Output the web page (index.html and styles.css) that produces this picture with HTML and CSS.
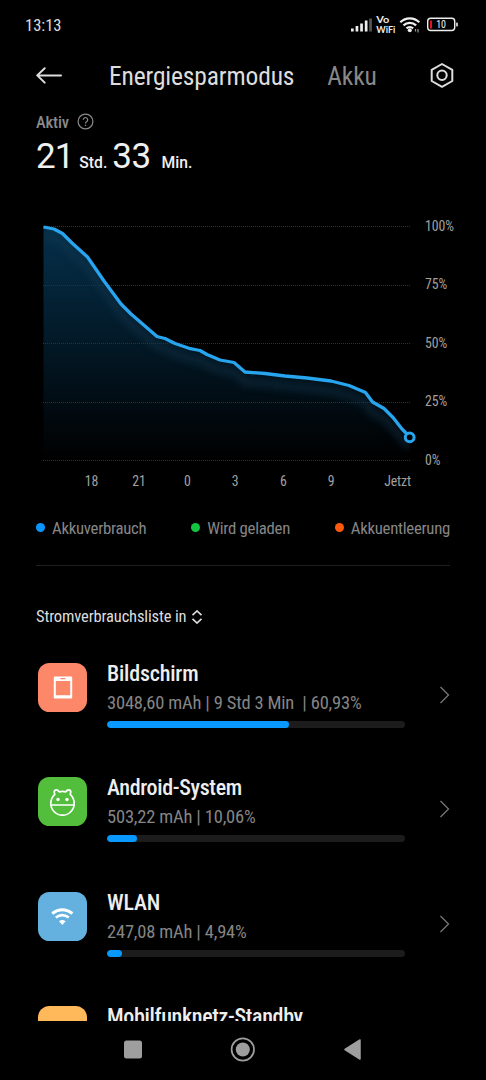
FILE: index.html
```
<!DOCTYPE html>
<html lang="de">
<head>
<meta charset="utf-8">
<title>Akku</title>
<link rel="stylesheet" href="styles.css">
</head>
<body>
<div class="screen">
  <div class="statusbar">
    <span class="clock">13:13</span>
    <svg class="status-icons" width="112" height="24" viewBox="348 13 112 24">
      <g fill="#eee">
        <rect x="351" y="28.5" width="2.7" height="3"/><rect x="355.6" y="26" width="2.7" height="5.5"/><rect x="360.2" y="23.5" width="2.7" height="8"/><rect x="364.8" y="20.5" width="2.7" height="11"/>
        <rect x="369.2" y="18.5" width="2.7" height="13" fill="#555"/>
      </g>
      <text class="vo" x="376.3" y="23.300" textLength="13" lengthAdjust="spacingAndGlyphs">Vo</text>
      <text class="vo" x="376.3" y="33" textLength="19" lengthAdjust="spacingAndGlyphs">WiFi</text>
      <g fill="none" stroke="#eee" stroke-width="2.200">
        <path d="M400.3 22.2a13.5 13.5 0 0 1 19 0"/><path d="M403.5 25.4a9 9 0 0 1 12.6 0"/><path d="M406.5 28.4a5 5 0 0 1 6.6 0"/>
      </g>
      <circle cx="409.8" cy="30.2" r="2" fill="#eee"/>
      <path d="M415.500 31.500v-2.500M418 29v3.500" stroke="#999" stroke-width="1.2"/>
      <rect x="427.7" y="18.2" width="27" height="12.3" rx="3" fill="none" stroke="#eee" stroke-width="1.4"/>
      <rect x="456.2" y="22.4" width="1.6" height="4" rx=".6" fill="#eee"/>
      <rect x="430" y="20.5" width="2" height="8" fill="#e3141c"/>
      <text class="level" x="436.3" y="28" textLength="9.6">10</text>
    </svg>
  </div>
  <div class="header">
    <svg class="back" width="28" height="20" viewBox="35 65 28 20"><path d="M61 75.4H37.5M44.7 68.2l-7.5 7.2 7.5 7.2" fill="none" stroke="#ddd" stroke-width="2" stroke-linecap="round" stroke-linejoin="round"/></svg>
    <span class="tab active">Energiesparmodus</span>
    <span class="tab">Akku</span>
    <svg class="gear" width="26" height="28" viewBox="429 61 26 28"><path d="M442 64l10.3 5.8v11.2L442 86.800l-10.300-5.800V69.800z" fill="none" stroke="#ddd" stroke-width="2" stroke-linejoin="round"/><circle cx="442" cy="75.300" r="4.700" fill="none" stroke="#ddd" stroke-width="2"/></svg>
  </div>
  <div class="activity">
    <div class="label"><span>Aktiv</span><svg width="17" height="17" viewBox="0 0 17 17"><circle cx="8.500" cy="8.500" r="7.400" fill="none" stroke="#8a8a8a" stroke-width="1.200"/><path d="M6.300 6.800a2.200 2.200 0 1 1 3.500 1.700q-1.300.8-1.300 2" fill="none" stroke="#8a8a8a" stroke-width="1.200"/><circle cx="8.500" cy="12.200" r=".8" fill="#8a8a8a"/></svg></div>
    <div class="time"><span class="num tight">21</span><span class="unit std">Std.</span><span class="num">33</span><span class="unit">Min.</span></div>
  </div>
  <svg class="chart" width="486" height="300" viewBox="0 205 486 300">
    <defs>
      <linearGradient id="fill" x1="0" y1="227" x2="0" y2="460" gradientUnits="userSpaceOnUse"><stop offset="0" stop-color="#05304b"/><stop offset=".45" stop-color="#031b2a"/><stop offset="1" stop-color="#000"/></linearGradient>
      <filter id="soft" x="-10%" y="-10%" width="120%" height="130%"><feGaussianBlur stdDeviation="3.500"/></filter>
      <clipPath id="area"><path d="M43.500 227L54 229 62.500 233.500 72 243 87.500 257 104 281 121 304 131 314 142 323.500 157 336.500 165 338.500 175 343.500 189 348.300 200 350.500 207 354.500 220 360 234 362.500 245 372 265 373.500 285 376 307 378 331 381 349 385.500 365.500 392.500 372.500 402 384 408.500 393 417.500 402 429 410 437V461H43.500z"/></clipPath>
    </defs>
    <g clip-path="url(#area)">
      <rect x="43" y="226" width="368" height="236" fill="url(#fill)"/>
      <path class="glow" filter="url(#soft)" transform="translate(0 10)" d="M43.500 227L54 229 62.500 233.500 72 243 87.500 257 104 281 121 304 131 314 142 323.500 157 336.500 165 338.500 175 343.500 189 348.300 200 350.500 207 354.500 220 360 234 362.500 245 372 265 373.500 285 376 307 378 331 381 349 385.500 365.500 392.500 372.500 402 384 408.500 393 417.500 402 429 410 437"/>
    </g>
    <path class="gridlines" d="M43 226.500H411M43 285.500H411M43 343.500H411M43 402.500H411M43 460.500H411"/>
    <path class="curve" d="M43.500 227L54 229 62.500 233.500 72 243 87.500 257 104 281 121 304 131 314 142 323.500 157 336.500 165 338.500 175 343.500 189 348.300 200 350.500 207 354.500 220 360 234 362.500 245 372 265 373.500 285 376 307 378 331 381 349 385.500 365.500 392.500 372.500 402 384 408.500 393 417.500 402 429 408 435"/>
    <circle cx="409.700" cy="437.300" r="4.400" fill="#000" stroke="#27a5ee" stroke-width="3"/>
    <g class="axis">
      <text x="425" y="231">100%</text><text x="425" y="289.300">75%</text><text x="425" y="347.800">50%</text><text x="425" y="406.300">25%</text><text x="425" y="464.800">0%</text>
      <g text-anchor="middle"><text x="91.500" y="486">18</text><text x="139" y="486">21</text><text x="187.300" y="486">0</text><text x="235" y="486">3</text><text x="283.300" y="486">6</text><text x="331" y="486">9</text></g>
      <text x="411" y="486" text-anchor="end">Jetzt</text>
    </g>
  </svg>
  <div class="legend">
    <span class="key"><i class="dot blue"></i>Akkuverbrauch</span>
    <span class="key"><i class="dot green"></i>Wird geladen</span>
    <span class="key"><i class="dot orange"></i>Akkuentleerung</span>
  </div>
  <div class="sort"><span>Stromverbrauchsliste in</span><svg width="12" height="14" viewBox="0 0 12 14"><path d="M1.500 5.200L6 1l4.500 4.200M1.500 8.800L6 13l4.500-4.200" fill="none" stroke="#ddd" stroke-width="1.700"/></svg></div>
  <div class="list">
    <div class="row">
      <svg class="icon" viewBox="0 0 49 49"><rect width="49" height="49" rx="11.500" fill="#fc8769"/><path fill="#fff" fill-rule="evenodd" d="M16.800 13.500h16.400q1 0 1 1v20q0 1-1 1H16.800q-1 0-1-1v-20q0-1 1-1zM17.800 18v14.200h14.400V18zM22.500 15v1.300h5V15z"/></svg>
      <div class="body"><div class="name wide">Bildschirm</div><div class="detail">3048,60 mAh | 9 Std 3 Min &nbsp;| 60,93%</div><div class="track"><div class="bar" style="width:60.93%"></div></div></div>
      <svg class="chev" viewBox="0 0 12 18"><path d="M1.500 1l8 8-8 8"/></svg>
    </div>
    <div class="row">
      <svg class="icon" viewBox="0 0 49 49"><rect width="49" height="49" rx="11.500" fill="#53be3b"/><g fill="none" stroke="#fff" stroke-width="1.700" stroke-linecap="round" stroke-linejoin="round"><path d="M16.800 17.300Q12.800 21 12.800 26.500a11.700 11.700 0 0 0 23.400 0q0-5.500-4-9.200 1.500-3-.6-4.200-2.200-.8-3.800 1.800-3.300-1-6.600 0-1.600-2.600-3.800-1.800-2.100 1.200-.6 4.200zM12.900 28h23.200"/></g><circle cx="20" cy="22.500" r="1.700" fill="#fff"/><circle cx="29" cy="22.500" r="1.700" fill="#fff"/></svg>
      <div class="body"><div class="name">Android-System</div><div class="detail">503,22 mAh | 10,06%</div><div class="track"><div class="bar" style="width:10.06%"></div></div></div>
      <svg class="chev" viewBox="0 0 12 18"><path d="M1.500 1l8 8-8 8"/></svg>
    </div>
    <div class="row">
      <svg class="icon" viewBox="0 0 49 49"><rect width="49" height="49" rx="11.500" fill="#64b1e0"/><path d="M24.300 33l-3.300-3.800q3.300-2.400 6.600 0z" fill="#fff"/><g fill="none" stroke="#fff"><path stroke-width="3" d="M14.200 21.500q10.100-7.600 20.200 0"/><path stroke-width="2.500" d="M17.800 25.600q6.500-5 13 0"/></g></svg>
      <div class="body"><div class="name wide">WLAN</div><div class="detail">247,08 mAh | 4,94%</div><div class="track"><div class="bar" style="width:4.940%"></div></div></div>
      <svg class="chev" viewBox="0 0 12 18"><path d="M1.500 1l8 8-8 8"/></svg>
    </div>
    <div class="row">
      <svg class="icon" viewBox="0 0 49 49"><rect width="49" height="49" rx="11.500" fill="#ffb85a"/></svg>
      <div class="body"><div class="name">Mobilfunknetz-Standby</div></div>
    </div>
  </div>
  <svg class="nav" width="486" height="59" viewBox="0 1021 486 59" fill="#9e9e9e"><rect x="124" y="1040.500" width="18" height="18" rx="2.500"/><circle cx="242.800" cy="1049.500" r="7"/><circle cx="242.800" cy="1049.500" r="11.200" fill="none" stroke="#9e9e9e" stroke-width="1.700"/><path d="M345 1049.500L360 1040v19z" stroke="#9e9e9e" stroke-width="1.500" stroke-linejoin="round"/></svg>
</div>
</body>
</html>
```
FILE: styles.css
```
* { box-sizing: border-box; }
body { margin: 0; background: #000; }
.screen { width: 486px; height: 1080px; overflow: hidden; display: flex; flex-direction: column; background: #000; color: #ddd; font-family: "Roboto Condensed", Roboto, sans-serif; font-stretch: 75%; }
.screen svg { display: block; flex: none; }
.statusbar { height: 50px; padding: 13px 26px 0 25px; display: flex; justify-content: space-between; align-items: flex-start; }
.clock { font-size: 16.5px; line-height: 25px; }
.vo { font: 700 9.3px Lato, sans-serif; fill: #eee; }
.level { font-size: 10px; fill: #eee; }
.header { height: 50px; padding: 0 31px 0 35px; display: flex; align-items: center; }
.tab { font-size: 25.5px; line-height: 30px; padding-top: 2px; letter-spacing: -.15px; color: #888; white-space: nowrap; }
.tab.active { color: #ddd; margin: 0 33px 0 46px; }
.gear { margin-left: auto; }
.activity { height: 105px; padding: 11px 36px 0; }
.label { display: flex; align-items: center; gap: 8px; height: 22px; font-size: 16.5px; letter-spacing: -.15px; color: #8a8a8a; }
.label span { font-weight: 500; }
.label svg { margin-top: -1px; }
.time { display: flex; align-items: baseline; padding-top: 1px; color: #f0f0f0; font-family: Roboto, sans-serif; font-stretch: 100%; }
.num { font-size: 35px; line-height: 46px; letter-spacing: -.5px; }
.tight { letter-spacing: -1px; }
.unit { font-size: 15.7px; font-weight: 500; margin-left: 11px; }
.std { margin: 0 5px 0 6px; }
.glow { fill: none; stroke: #12394f; stroke-width: 9; opacity: .4; }
.gridlines { fill: none; stroke: #303030; stroke-width: 1; stroke-dasharray: 1 1; }
.curve { fill: none; stroke: #27a5ee; stroke-width: 3.3; stroke-linejoin: round; }
.axis { font-size: 13.8px; letter-spacing: -.1px; fill: #a0a0a0; }
.legend { height: 61px; margin: 0 36px; padding-top: 11px; display: flex; justify-content: space-between; border-bottom: 1px solid #1f1f1f; font-size: 16.8px; letter-spacing: -.28px; line-height: 24px; color: #868686; }
.key { display: flex; height: 24px; align-items: center; white-space: nowrap; }
.dot { width: 9px; height: 9px; border-radius: 50%; margin: -2px 7px 0 0; }
.blue { background: #0b95ff; }
.green { background: #14c53f; }
.orange { background: #ff5a0c; }
.sort { display: flex; align-items: center; gap: 5px; height: 90px; padding: 11px 36px 0; font-size: 16.5px; letter-spacing: -.15px; }
.list { height: 365px; padding-top: 7px; overflow: hidden; }
.row { height: 114.3px; padding: 0 36px 0 38px; display: flex; align-items: flex-start; }
.icon { width: 49px; height: 49px; }
.body { width: 298px; margin: -3px 0 0 20px; }
.name { font-size: 22px; font-weight: 500; line-height: 28px; letter-spacing: -.35px; color: #eee; white-space: nowrap; }
.wide { letter-spacing: -.2px; }
.detail { font-size: 18.5px; line-height: 30px; letter-spacing: -.18px; color: #858585; white-space: nowrap; }
.track { height: 7px; margin-top: 3px; border-radius: 4px; background: #1c1c1c; overflow: hidden; }
.bar { height: 100%; border-radius: 4px; background: #0898fe; }
.chev { width: 12px; height: 18px; margin: 23px -1px 0 auto; fill: none; stroke: #777; stroke-width: 1.3; }
```
